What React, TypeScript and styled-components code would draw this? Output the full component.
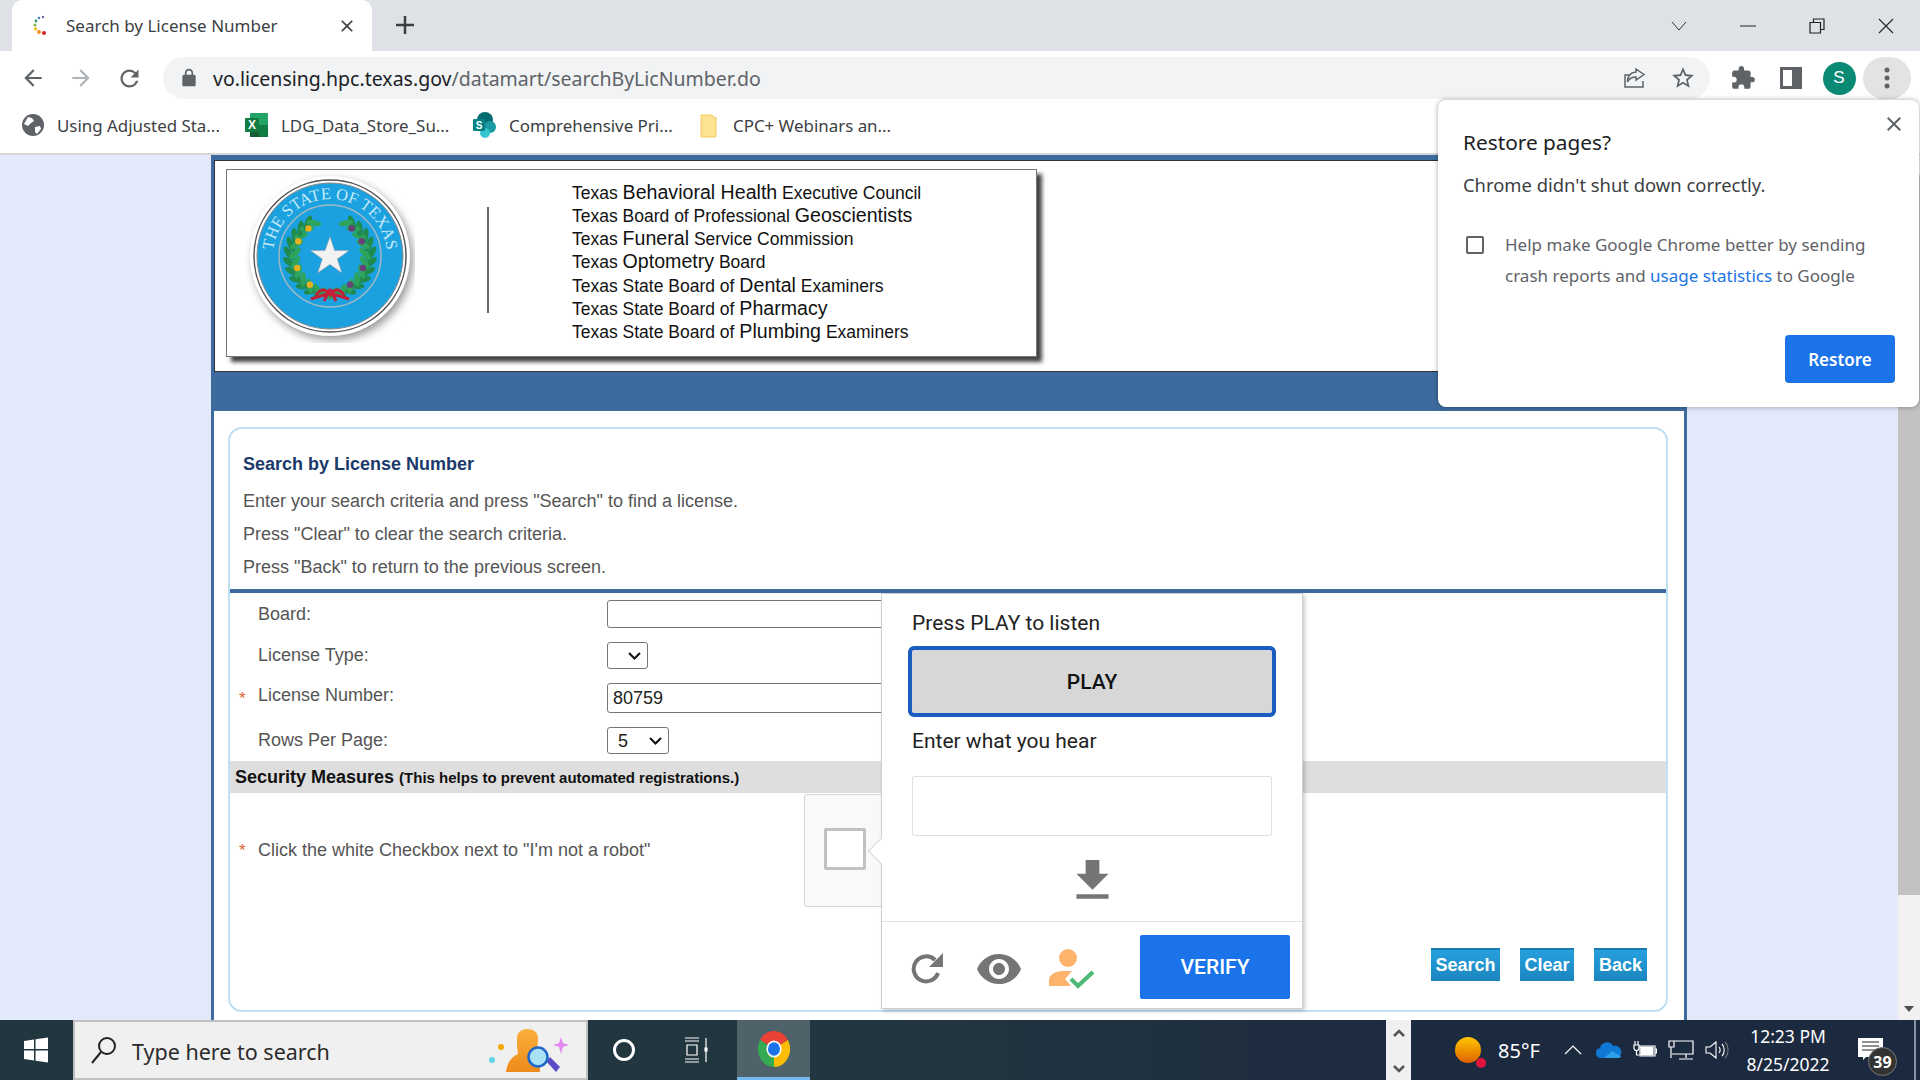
import React from "react";
import styled, { createGlobalStyle } from "styled-components";

const GlobalStyle = createGlobalStyle`
  html, body {
    margin: 0;
    padding: 0;
    height: 100%;
    overflow: hidden;
    font-family: "Liberation Sans", Arial, sans-serif;
  }
  * {
    box-sizing: border-box;
  }
`;

const UI_FONT = `"Noto Sans", "Open Sans", sans-serif`;

const Screen = styled.div`
  position: relative;
  width: 1920px;
  height: 1080px;
  display: flex;
  flex-direction: column;
  overflow: hidden;
  background: #fff;
`;

/* chrome: tabs */
const TabStrip = styled.div`
  height: 51px;
  background: #dee1e6;
  display: flex;
  align-items: flex-end;
  padding-left: 12px;
`;

const Tab = styled.div`
  width: 360px;
  height: 51px;
  background: #fff;
  border-radius: 10px 10px 0 0;
  display: flex;
  align-items: center;
  padding: 0 15px 0 19px;
  font-family: ${UI_FONT};
  font-size: 17px;
  color: #3c4043;
`;

const TabTitle = styled.span`
  margin-left: 15px;
  flex: 1;
`;

const NewTab = styled.div`
  width: 24px;
  height: 24px;
  margin: 0 0 14px 21px;
`;

const WindowControls = styled.div`
  margin-left: auto;
  height: 51px;
  display: flex;
  align-items: center;
`;

const WindowButton = styled.div`
  width: 69px;
  height: 42px;
  display: flex;
  align-items: center;
  justify-content: center;
`;

/* chrome: toolbar */
const Toolbar = styled.div`
  height: 51px;
  background: #fff;
  display: flex;
  align-items: center;
  padding: 3px 0 0 9px;
`;

const NavButton = styled.div`
  width: 48px;
  height: 40px;
  display: flex;
  align-items: center;
  justify-content: center;
`;

const Omnibox = styled.div`
  width: 1547px;
  height: 42px;
  margin-left: 10px;
  background: #f1f3f4;
  border-radius: 21px;
  display: flex;
  align-items: center;
  padding: 0 3px 0 16px;
  font-family: ${UI_FONT};
  font-size: 19.5px;
  color: #5f6368;
`;

const UrlText = styled.div`
  margin-left: 14px;
  flex: 1;
  white-space: nowrap;
`;

const UrlHost = styled.span`
  color: #202124;
`;

const OmniIcon = styled.div`
  width: 48px;
  display: flex;
  justify-content: center;
`;

const ToolButton = styled.div<{ $active?: boolean }>`
  width: 48px;
  height: 42px;
  display: flex;
  align-items: center;
  justify-content: center;
  border-radius: 21px;
  background: ${(props) => (props.$active ? "#e3e3e3" : "transparent")};
`;

const ToolGroup = styled.div`
  margin-left: 9px;
  display: flex;
`;

const Avatar = styled.div`
  width: 33px;
  height: 33px;
  border-radius: 50%;
  background: #0a8a74;
  color: #fff;
  font-size: 17px;
  display: flex;
  align-items: center;
  justify-content: center;
`;

/* chrome: bookmarks */
const BookmarkBar = styled.div`
  height: 53px;
  background: #fff;
  border-bottom: 2px solid #d6d6d6;
  display: flex;
  align-items: center;
  padding: 0 0 5px 21px;
  font-family: ${UI_FONT};
  font-size: 16.9px;
  color: #3c4043;
`;

const Bookmark = styled.div<{ $width: number }>`
  width: ${(props) => props.$width}px;
  display: flex;
  align-items: center;
  gap: 12px;
  white-space: nowrap;
`;

/* web page */
const Viewport = styled.div`
  flex: 1;
  min-height: 0;
  display: flex;
  background: #e3e8fa;
`;

const PageArea = styled.div`
  flex: 1;
  padding-left: 211px;
`;

const Main = styled.div`
  width: 1476px;
  height: 100%;
  background: #fff;
  border: solid #3d6b9e;
  border-width: 5px 3px 0;
  display: flex;
  flex-direction: column;
`;

const Banner = styled.div`
  height: 212px;
  flex: none;
  border-top: 1px solid #333;
  border-left: 1px solid #333;
  border-bottom: 1px solid #333;
  padding: 8px 0 0 11px;
`;

const LogoBox = styled.div`
  width: 811px;
  height: 188px;
  background: #fff;
  border: 1px solid #777;
  box-shadow: 5px 5px 4px #444;
  display: flex;
  align-items: flex-start;
  padding-left: 18px;
`;

const Seal = styled.svg`
  flex: none;
  margin-top: 1px;
`;

const LogoRule = styled.div`
  width: 2px;
  height: 106px;
  flex: none;
  margin: 37px 0 0 72px;
  background: #666;
`;

const BoardList = styled.div`
  margin: 11px 0 0 83px;
  font-size: 17.5px;
  color: #111;
  white-space: nowrap;
`;

const BoardLine = styled.div`
  height: 23.17px;
  line-height: 23.17px;
`;

const BoardBig = styled.span`
  font-size: 19.6px;
`;

const BlueBand = styled.div`
  height: 39px;
  flex: none;
  background: #3d6b9e;
`;

const Card = styled.div`
  flex: 1;
  min-height: 0;
  margin: 16px 16px 8px 14px;
  border: 2px solid #bfe0f2;
  border-radius: 14px;
  display: flex;
  flex-direction: column;
  overflow: hidden;
`;

const Intro = styled.div`
  padding: 25px 0 0 13px;
`;

const CardTitle = styled.div`
  font-size: 18px;
  font-weight: bold;
  line-height: 20px;
  margin-bottom: 11px;
  color: #1b3a6b;
`;

const IntroLine = styled.div`
  font-size: 18px;
  line-height: 33px;
  color: #555;
`;

const BlueRule = styled.div`
  height: 4px;
  flex: none;
  margin-top: 5px;
  background: #3d6b9e;
`;

const FormRow = styled.div<{ $height: number }>`
  height: ${(props) => props.$height}px;
  flex: none;
  display: flex;
  align-items: center;
`;

const Required = styled.span<{ $show?: boolean }>`
  width: 28px;
  flex: none;
  padding: 2px 0 0 9px;
  font-size: 17px;
  color: #e0663c;
  visibility: ${(props) => (props.$show ? "visible" : "hidden")};
`;

const FieldLabel = styled.label<{ $raised?: boolean }>`
  width: 349px;
  flex: none;
  font-size: 18px;
  color: #555;
  margin-bottom: ${(props) => (props.$raised ? 6 : 0)}px;
`;

const TextField = styled.input<{ $height: number }>`
  width: 300px;
  height: ${(props) => props.$height}px;
  border: 1px solid #767676;
  border-radius: 3px;
  padding: 0 5px;
  font: 18px "Liberation Sans", Arial, sans-serif;
  color: #222;
  background: #fff;
`;

const SelectWrap = styled.div<{ $width: number }>`
  position: relative;
  width: ${(props) => props.$width}px;
  height: 27px;
`;

const SelectField = styled.select`
  appearance: none;
  width: 100%;
  height: 100%;
  border: 1px solid #767676;
  border-radius: 3px;
  padding-left: 10px;
  font: 18px "Liberation Sans", Arial, sans-serif;
  color: #222;
  background: #fff;
`;

const SelectChevron = styled.svg`
  position: absolute;
  right: 7px;
  top: 10px;
  pointer-events: none;
`;

const SecurityBar = styled.div`
  height: 32px;
  flex: none;
  background: #dedede;
  display: flex;
  align-items: center;
  padding-left: 5px;
  font-weight: bold;
  font-size: 18px;
  color: #111;
  white-space: pre;
`;

const SecurityNote = styled.span`
  font-size: 15px;
`;

const RobotRow = styled.div`
  height: 114px;
  flex: none;
  display: flex;
  align-items: center;
`;

const RobotLabel = styled.div`
  width: 546px;
  flex: none;
  font-size: 18px;
  color: #555;
`;

const RecaptchaBox = styled.div`
  width: 300px;
  height: 113px;
  background: #f9f9f9;
  border: 1px solid #d3d3d3;
  border-radius: 3px;
  padding: 33px 0 0 19px;
`;

const RecaptchaCheck = styled.div`
  width: 42px;
  height: 42px;
  background: #fff;
  border: 3px solid #c1c1c1;
  border-radius: 2px;
`;

const ActionRow = styled.div`
  margin-top: auto;
  padding: 0 19px 29px 0;
  display: flex;
  justify-content: flex-end;
  gap: 20px;
`;

const ActionButton = styled.button<{ $width: number }>`
  width: ${(props) => props.$width}px;
  height: 33px;
  padding: 0;
  border: 0;
  border-top: 2px solid #1679ad;
  background: linear-gradient(#27a0de, #1b85bd);
  color: #fff;
  font: bold 18px "Liberation Sans", Arial, sans-serif;
`;

const Scrollbar = styled.div`
  width: 22px;
  flex: none;
  background: #f1f1f1;
  display: flex;
  flex-direction: column;
  align-items: center;
`;

const ScrollThumb = styled.div`
  width: 100%;
  height: 720px;
  margin-top: 20px;
  background: #c1c1c1;
`;

const ScrollArrow = styled.div`
  margin-top: auto;
  margin-bottom: 8px;
  width: 0;
  height: 0;
  border: 5px solid transparent;
  border-top: 6px solid #505050;
  border-bottom: 0;
`;

/* audio captcha popup */
const CaptchaPopup = styled.div`
  position: absolute;
  left: 881px;
  top: 593px;
  width: 422px;
  height: 416px;
  background: #fff;
  border: 1px solid #cfcfcf;
  box-shadow: 2px 2px 4px rgba(0, 0, 0, 0.2);
  font-family: Roboto, sans-serif;
  color: #222;
  display: flex;
  flex-direction: column;
`;

const CaptchaPointer = styled.div`
  position: absolute;
  left: -10px;
  top: 247px;
  width: 20px;
  height: 20px;
  background: #fff;
  border-left: 1px solid #d5d5d5;
  border-bottom: 1px solid #d5d5d5;
  transform: rotate(45deg);
`;

const CaptchaBody = styled.div`
  flex: 1;
  padding: 14px 27px 0 30px;
  display: flex;
  flex-direction: column;
`;

const CaptchaLabel = styled.div`
  font-size: 21px;
  line-height: 30px;
`;

const PlayButton = styled.button`
  width: 368px;
  height: 71px;
  margin: 8px 0 9px -4px;
  background: #d7d7d7;
  border: 4px solid #1a5cc0;
  border-radius: 6px;
  font: 500 21px Roboto, sans-serif;
  color: #111;
`;

const AnswerInput = styled.input`
  width: 360px;
  height: 60px;
  margin-top: 20px;
  border: 1px solid #e0e0e0;
  border-radius: 2px;
`;

const DownloadSlot = styled.div`
  margin-top: 17px;
  display: flex;
  justify-content: center;
  padding-right: 3px;
`;

const CaptchaFooter = styled.div`
  height: 87px;
  flex: none;
  border-top: 1px solid #e0e0e0;
  display: flex;
  align-items: center;
  padding: 0 12px 0 29px;
`;

const FooterIcons = styled.div`
  display: flex;
  align-items: center;
  gap: 30px;
  padding-top: 7px;
`;

const PersonSlot = styled.div`
  margin-left: -4px;
  display: flex;
`;

const VerifyButton = styled.button`
  margin-left: auto;
  width: 150px;
  height: 64px;
  margin-top: 3px;
  background: #1a73e8;
  border: 0;
  border-radius: 2px;
  color: #fff;
  font: 500 21px Roboto, sans-serif;
`;

/* restore bubble */
const RestoreBubble = styled.div`
  position: absolute;
  left: 1438px;
  top: 100px;
  width: 481px;
  height: 307px;
  background: #fff;
  border-radius: 8px;
  box-shadow: 0 0 5px rgba(0, 0, 0, 0.35);
  padding: 24px 25px 0;
  font-family: ${UI_FONT};
`;

const BubbleClose = styled.div`
  position: absolute;
  right: 13px;
  top: 12px;
  display: flex;
`;

const BubbleTitle = styled.div`
  font-size: 20.8px;
  line-height: 36px;
  color: #202124;
`;

const BubbleText = styled.div`
  margin-top: 10px;
  font-size: 18.4px;
  line-height: 30px;
  color: #3c4043;
`;

const ConsentRow = styled.div`
  margin-top: 30px;
  display: flex;
  align-items: flex-start;
`;

const ConsentBox = styled.div`
  width: 18px;
  height: 18px;
  margin: 6px 21px 0 3px;
  flex: none;
  border: 2px solid #5f6368;
  border-radius: 2px;
`;

const ConsentText = styled.div`
  font-size: 17px;
  line-height: 30.5px;
  color: #5f6368;
  white-space: nowrap;
`;

const ConsentLink = styled.span`
  color: #1a73e8;
`;

const RestoreButton = styled.button`
  position: absolute;
  right: 24px;
  bottom: 24px;
  width: 110px;
  height: 48px;
  border: 0;
  border-radius: 4px;
  background: #1a73e8;
  color: #fff;
  font: 600 17px ${UI_FONT};
`;

/* windows taskbar */
const Taskbar = styled.div`
  height: 60px;
  flex: none;
  background: linear-gradient(to right, #22363f 0, #22363f 45%, #1c2a40 75%);
  display: flex;
  align-items: stretch;
  padding-right: 4px;
  color: #fff;
  font-family: ${UI_FONT};
`;

const StartButton = styled.div`
  width: 73px;
  padding-right: 2px;
  display: flex;
  align-items: center;
  justify-content: center;
`;

const SearchBox = styled.div`
  width: 515px;
  background: #f0f0f0;
  border: solid #c0c0c0;
  border-width: 2px;
  display: flex;
  align-items: center;
  padding: 0 17px 0 15px;
  color: #2b2b2b;
  font-size: 21.5px;
`;

const SearchText = styled.span`
  margin: 3px 0 0 14px;
  flex: 1;
`;

const TaskSlot = styled.div<{ $width: number }>`
  width: ${(props) => props.$width}px;
  display: flex;
  align-items: center;
  justify-content: center;
`;

const ChromeTile = styled.div`
  width: 73px;
  margin-left: 5px;
  background: #4f6169;
  border-bottom: 3px solid #76b9ed;
  display: flex;
  align-items: center;
  justify-content: center;
`;

const TraySpacer = styled.div`
  flex: 1;
`;

const TrayScroller = styled.div`
  width: 25px;
  background: #f0f0f0;
  display: flex;
  flex-direction: column;
  align-items: center;
  justify-content: space-between;
  padding: 8px 0 6px;
`;

const Weather = styled.div`
  margin-left: 44px;
  width: 100px;
  display: flex;
  align-items: center;
  gap: 17px;
  font-size: 20px;
`;

const SunBadge = styled.div`
  position: relative;
  width: 26px;
  height: 26px;
  flex: none;
  border-radius: 50%;
  background: linear-gradient(#ffc800, #e06000);
  &::after {
    content: "";
    position: absolute;
    right: -5px;
    bottom: -5px;
    width: 10px;
    height: 10px;
    border-radius: 50%;
    background: #e0143c;
  }
`;

const TrayIcon = styled.div`
  width: 36px;
  display: flex;
  align-items: center;
  justify-content: center;
`;

const Clock = styled.div`
  width: 86px;
  margin-left: 10px;
  display: flex;
  flex-direction: column;
  align-items: center;
  justify-content: center;
  gap: 6px;
  font-size: 17.5px;
  line-height: 22px;
  white-space: nowrap;
`;

const NotifySlot = styled.div`
  position: relative;
  width: 25px;
  margin: 18px 0 0 27px;
`;

const NotifyBadge = styled.div`
  position: absolute;
  left: 10px;
  top: 9px;
  width: 29px;
  height: 29px;
  border-radius: 50%;
  border: 1px solid #777;
  background: #333;
  display: flex;
  align-items: center;
  justify-content: center;
  font-size: 16px;
  font-weight: 700;
`;

const DesktopEdge = styled.div`
  width: 2px;
  margin-left: 31px;
  background: #8a93a0;
`;

const Icon = ({
  d,
  size = 24,
  color = "#5f6368",
}: {
  d: string;
  size?: number;
  color?: string;
}) => (
  <svg width={size} height={size} viewBox="0 0 24 24" fill={color}>
    <path d={d} />
  </svg>
);

const PATHS = {
  back: "M20 11H7.83l5.59-5.59L12 4l-8 8 8 8 1.41-1.41L7.83 13H20v-2z",
  forward: "M12 4l-1.41 1.41L16.17 11H4v2h12.17l-5.58 5.59L12 20l8-8z",
  reload:
    "M17.65 6.35A7.958 7.958 0 0 0 12 4c-4.42 0-7.99 3.58-7.99 8s3.57 8 7.99 8c3.73 0 6.84-2.55 7.73-6h-2.08A5.99 5.99 0 0 1 12 18c-3.31 0-6-2.69-6-6s2.69-6 6-6c1.66 0 3.14.69 4.22 1.78L13 11h7V4l-2.35 2.35z",
  lock: "M18 8h-1V6c0-2.76-2.24-5-5-5S7 3.24 7 6v2H6c-1.1 0-2 .9-2 2v10c0 1.1.9 2 2 2h12c1.1 0 2-.9 2-2V10c0-1.1-.9-2-2-2zM9 6c0-1.66 1.34-3 3-3s3 1.34 3 3v2H9V6z",
  star: "M22 9.24l-7.19-.62L12 2 9.19 8.63 2 9.24l5.46 4.73L5.82 21 12 17.27 18.18 21l-1.63-7.03L22 9.24zM12 15.4l-3.76 2.27 1-4.28-3.32-2.88 4.38-.38L12 6.1l1.71 4.04 4.38.38-3.32 2.88 1 4.28L12 15.4z",
  puzzle:
    "M20.5 11H19V7c0-1.1-.9-2-2-2h-4V3.5C13 2.12 11.88 1 10.5 1S8 2.12 8 3.5V5H4c-1.1 0-1.99.9-1.99 2v3.8H3.5c1.49 0 2.7 1.21 2.7 2.7s-1.21 2.7-2.7 2.7H2V20c0 1.1.9 2 2 2h3.8v-1.5c0-1.49 1.21-2.7 2.7-2.7 1.49 0 2.7 1.21 2.7 2.7V22H17c1.1 0 2-.9 2-2v-4h1.5c1.38 0 2.5-1.12 2.5-2.5S21.88 11 20.5 11z",
  eye: "M12 4.5C7 4.5 2.73 7.61 1 12c1.73 4.39 6 7.5 11 7.5s9.27-3.11 11-7.5c-1.73-4.39-6-7.5-11-7.5zM12 17c-2.76 0-5-2.24-5-5s2.24-5 5-5 5 2.24 5 5-2.24 5-5 5zm0-8c-1.66 0-3 1.34-3 3s1.34 3 3 3 3-1.34 3-3-1.34-3-3-3z",
  download: "M19 9h-4V3H9v6H5l7 7 7-7zM5 18v2h14v-2H5z",
  close:
    "M19 6.41L17.59 5 12 10.59 6.41 5 5 6.41 10.59 12 5 17.59 6.41 19 12 13.41 17.59 19 19 17.59 13.41 12z",
};

const Favicon = () => (
  <svg width="20" height="24" viewBox="0 0 20 24">
    <circle cx="12" cy="3" r="1.2" fill="#7b5fb0" />
    <circle cx="8" cy="4" r="1.3" fill="#4a7fc8" />
    <circle cx="5" cy="7" r="1.4" fill="#2a9a6a" />
    <circle cx="4" cy="11" r="1.5" fill="#7ab648" />
    <circle cx="4.5" cy="15" r="1.7" fill="#f2c21a" />
    <circle cx="8" cy="18" r="1.9" fill="#f08a1a" />
    <circle cx="13" cy="19" r="2.1" fill="#d8262c" />
  </svg>
);

const Globe = () => (
  <svg width="24" height="24" viewBox="0 0 24 24">
    <circle cx="12" cy="12" r="11" fill="#5f6368" />
    <path d="M7 4l4 1 2 3-3 2-3 3-4-2zM14 14l5-1 1 3-4 5-2-2z" fill="#fff" />
  </svg>
);

const ExcelIcon = () => (
  <svg width="24" height="26" viewBox="0 0 24 26">
    <rect x="5" y="1" width="18" height="24" rx="1" fill="#21a366" />
    <rect x="14" y="13" width="9" height="12" fill="#107c41" />
    <rect x="5" y="13" width="9" height="12" fill="#185c37" />
    <rect x="0" y="6" width="14" height="14" rx="1" fill="#107c41" />
    <text x="7" y="17" textAnchor="middle" fontSize="12" fontWeight="bold" fill="#fff" fontFamily="Liberation Sans">
      X
    </text>
  </svg>
);

const SharePointIcon = () => (
  <svg width="24" height="26" viewBox="0 0 24 26">
    <circle cx="12" cy="8" r="8" fill="#036c70" />
    <circle cx="17" cy="15" r="6" fill="#1a9ba1" />
    <circle cx="12" cy="21" r="5" fill="#37c6d0" />
    <rect x="0" y="7" width="12" height="12" rx="1" fill="#038387" />
    <text x="6" y="17" textAnchor="middle" fontSize="10" fontWeight="bold" fill="#fff" fontFamily="Liberation Sans">
      S
    </text>
  </svg>
);

const FolderIcon = () => (
  <svg width="24" height="26" viewBox="0 0 24 26">
    <path d="M4 3h11l1 2h2a1 1 0 0 1 1 1v18a1 1 0 0 1-1 1H4z" fill="#fde293" stroke="#f0c95c" />
  </svg>
);

const leafAngles = [100, 114, 128, 142, 156, 170, 184, 198, 212, 226, 240];

const Wreath = ({ flip, berry }: { flip?: boolean; berry: string }) => (
  <g transform={flip ? "translate(170,0) scale(-1,1)" : undefined}>
    {leafAngles.map((angle) => {
      const rad = (angle * Math.PI) / 180;
      const x = 85 + 38 * Math.cos(rad);
      const y = 85 + 38 * Math.sin(rad);
      return (
        <g key={angle}>
          <ellipse cx={x - 3} cy={y} rx="8" ry="3.2" fill="#1f8a4c" transform={`rotate(${angle + 50} ${x - 3} ${y})`} />
          <ellipse cx={x + 3} cy={y} rx="7.5" ry="3" fill="#2ea35c" transform={`rotate(${angle + 130} ${x + 3} ${y})`} />
        </g>
      );
    })}
    {[125, 160, 205, 232].map((angle) => {
      const rad = (angle * Math.PI) / 180;
      return (
        <circle
          key={angle}
          cx={85 + 35 * Math.cos(rad)}
          cy={85 + 35 * Math.sin(rad)}
          r="3.2"
          fill={berry}
        />
      );
    })}
  </g>
);

const StateSeal = () => (
  <Seal width="170" height="172" viewBox="0 0 170 172">
    <defs>
      <filter id="sealBlur" x="-20%" y="-20%" width="140%" height="140%">
        <feGaussianBlur stdDeviation="4" />
      </filter>
      <path id="sealArc" d="M 31.400 104.500 A 57 57 0 1 1 138.600 104.500" />
    </defs>
    <circle cx="88" cy="89" r="80" fill="#999" filter="url(#sealBlur)" />
    <circle cx="85" cy="85" r="80" fill="#fff" />
    <circle cx="85" cy="85" r="76" fill="#fff" stroke="#555" strokeWidth="1.5" />
    <circle cx="85" cy="85" r="73" fill="#1ba1df" stroke="#888" strokeWidth="1" />
    <circle cx="85" cy="85" r="51" fill="none" stroke="#a0b8c4" strokeWidth="1.5" />
    <text fontFamily="Liberation Serif" fontSize="16.5" fill="#c4e9f8">
      <textPath href="#sealArc" startOffset="50%" textAnchor="middle">
        THE STATE OF TEXAS
      </textPath>
    </text>
    <Wreath berry="#e8b020" />
    <Wreath flip berry="#6a3f78" />
    <path
      d="M71 124q7-10 14 0 7-10 14 0M66 128l19-6 19 6M85 118l-6 12M85 118l6 12"
      fill="none"
      stroke="#c41e3a"
      strokeWidth="3"
    />
    <path
      d="M85 62l5.5 16.6h17.5l-14.2 10.3 5.4 16.6L85 95.3 70.3 105.5l5.4-16.6L61.5 78.6H79z"
      fill="#f2f2f2"
      stroke="#999"
      strokeWidth="0.6"
      transform="translate(85 84) scale(0.83) translate(-85 -84)"
    />
  </Seal>
);

const RefreshGlyph = () => (
  <svg width="34" height="34" viewBox="0 0 34 34">
    <path d="M27 21a12.5 12.5 0 1 1-3-13" fill="none" stroke="#757575" strokeWidth="4" />
    <path d="M32 1v14H18z" fill="#757575" />
  </svg>
);

const PersonCheck = () => (
  <svg width="46" height="40" viewBox="0 0 46 40">
    <circle cx="19" cy="9" r="9" fill="#fdb36b" />
    <path d="M0 37v-6c0-5 6-9 14-9h9l-7 8 6 7z" fill="#fdb36b" />
    <path d="M22 30l7 7 15-14" fill="none" stroke="#4cba74" strokeWidth="4" />
  </svg>
);

const WindowsLogo = () => (
  <svg width="26" height="26" viewBox="0 0 26 26" fill="#fff">
    <path d="M1 4l10-1.5V12H1zM12.5 2.3L25 .5V12H12.5zM1 13.5h10v10L1 22zM12.5 13.5H25V25.5l-12.5-1.8z" />
  </svg>
);

const SearchGlyph = () => (
  <svg width="28" height="30" viewBox="0 0 28 30" fill="none" stroke="#222" strokeWidth="2">
    <circle cx="17" cy="11" r="8" />
    <path d="M11 17L2 28" />
  </svg>
);

const SearchArt = () => (
  <svg width="80" height="44" viewBox="0 0 80 44">
    <defs>
      <linearGradient id="artBody" x1="0" y1="0" x2="0" y2="1">
        <stop offset="0" stopColor="#fbb03b" />
        <stop offset="1" stopColor="#ee8a1c" />
      </linearGradient>
    </defs>
    <circle cx="12" cy="19" r="3" fill="#f5a800" />
    <circle cx="3" cy="32" r="3" fill="#62d4e8" />
    <path d="M28 10c0-12 21-12 21 0 0 10-2 12-3 15 3 3 5 9 5 19H17c1-9 5-15 12-18-1-6-1-10-1-16z" fill="url(#artBody)" />
    <path d="M57 33l10 11 4-5-10-10z" fill="#5b4dc7" />
    <circle cx="49" cy="29" r="9.5" fill="#a8e2f4" stroke="#1e66c8" strokeWidth="2.5" />
    <path d="M72 9l2 6 6 2-6 2-2 7-2-7-6-2 6-2z" fill="#e48bf0" />
  </svg>
);

const CortanaRing = () => (
  <svg width="24" height="24" viewBox="0 0 24 24">
    <circle cx="12" cy="12" r="9.5" fill="none" stroke="#fff" strokeWidth="3" />
  </svg>
);

const TaskView = () => (
  <svg width="26" height="26" viewBox="0 0 26 26" fill="none" stroke="#fff" strokeWidth="1.2">
    <path d="M2 1h14M2 4h14M4 8h10v10H4zM2 22h14M2 25h14M23 1v10M23 14v11" />
    <path d="M22 11h2v3h-2z" fill="#fff" />
  </svg>
);

const ChromeLogo = () => (
  <svg width="32" height="36" viewBox="0 0 24 24" preserveAspectRatio="none">
    <path d="M12 12L1.6 6A12 12 0 0 1 22.4 6z" fill="#ea4335" />
    <path d="M12 12L22.4 6A12 12 0 0 1 12 24z" fill="#fbbc04" />
    <path d="M12 12L12 24A12 12 0 0 1 1.6 6z" fill="#34a853" />
    <circle cx="12" cy="12" r="5.7" fill="#fff" />
    <circle cx="12" cy="12" r="4.5" fill="#1a73e8" />
  </svg>
);

const MiniChevron = ({ up }: { up?: boolean }) => (
  <svg width="14" height="10" viewBox="0 0 14 10" fill="none" stroke="#555" strokeWidth="2.5">
    <path d={up ? "M2 8l5-5 5 5" : "M2 2l5 5 5-5"} />
  </svg>
);

const Chevron = () => (
  <SelectChevron width="13" height="8" viewBox="0 0 13 8" fill="none" stroke="#111" strokeWidth="2">
    <path d="M1 1l5.5 5.5L12 1" />
  </SelectChevron>
);

const App = () => {
  return (
    <Screen>
      <GlobalStyle />

      <TabStrip>
        <Tab>
          <Favicon />
          <TabTitle>Search by License Number</TabTitle>
          <Icon d={PATHS.close} size={20} color="#3c4043" />
        </Tab>
        <NewTab>
          <svg width="24" height="24" viewBox="0 0 24 24" stroke="#3c4043" strokeWidth="2.5">
            <path d="M12 3v18M3 12h18" />
          </svg>
        </NewTab>
        <WindowControls>
          <WindowButton>
            <svg width="16" height="10" viewBox="0 0 16 10" fill="none" stroke="#333">
              <path d="M1 1l7 8 7-8" />
            </svg>
          </WindowButton>
          <WindowButton>
            <svg width="16" height="2" viewBox="0 0 16 2" stroke="#222">
              <path d="M0 1h16" />
            </svg>
          </WindowButton>
          <WindowButton>
            <svg width="16" height="16" viewBox="0 0 16 16" fill="none" stroke="#222" strokeWidth="1.2">
              <path d="M1 4.5h10.500V15H1zM4.500 4.500V1H15v10.500h-3.500" />
            </svg>
          </WindowButton>
          <WindowButton>
            <svg width="16" height="16" viewBox="0 0 16 16" stroke="#222" strokeWidth="1.1">
              <path d="M1 1l14 14M15 1L1 15" />
            </svg>
          </WindowButton>
        </WindowControls>
      </TabStrip>

      <Toolbar>
        <NavButton>
          <Icon d={PATHS.back} size={26} />
        </NavButton>
        <NavButton>
          <Icon d={PATHS.forward} size={26} color="#b0b3b8" />
        </NavButton>
        <NavButton>
          <Icon d={PATHS.reload} size={27} />
        </NavButton>
        <Omnibox>
          <Icon d={PATHS.lock} size={20} />
          <UrlText>
            <UrlHost>vo.licensing.hpc.texas.gov</UrlHost>/datamart/searchByLicNumber.do
          </UrlText>
          <OmniIcon>
            <svg width="24" height="24" viewBox="0 0 24 24" fill="none" stroke="#5f6368" strokeWidth="1.5">
              <path d="M20 15v6H2V9h5M13 3l8 5.5-8 5.5v-3c-5 0-7 2-8.5 5 0-6 3-9.5 8.5-10z" />
            </svg>
          </OmniIcon>
          <OmniIcon>
            <Icon d={PATHS.star} size={26} />
          </OmniIcon>
        </Omnibox>
        <ToolGroup>
          <ToolButton>
            <Icon d={PATHS.puzzle} size={26} />
          </ToolButton>
          <ToolButton>
            <svg width="22" height="22" viewBox="0 0 22 22">
              <path d="M0 0h22v22H0z" fill="#5f6368" />
              <path d="M3 3h9v16H3z" fill="#fff" />
            </svg>
          </ToolButton>
          <ToolButton>
            <Avatar>S</Avatar>
          </ToolButton>
          <ToolButton $active>
            <svg width="6" height="22" viewBox="0 0 6 22" fill="#5f6368">
              <circle cx="3" cy="3" r="2.5" />
              <circle cx="3" cy="11" r="2.5" />
              <circle cx="3" cy="19" r="2.5" />
            </svg>
          </ToolButton>
        </ToolGroup>
      </Toolbar>

      <BookmarkBar>
        <Bookmark $width={224}>
          <Globe />
          Using Adjusted Sta...
        </Bookmark>
        <Bookmark $width={228}>
          <ExcelIcon />
          LDG_Data_Store_Su...
        </Bookmark>
        <Bookmark $width={224}>
          <SharePointIcon />
          Comprehensive Pri...
        </Bookmark>
        <Bookmark $width={224}>
          <FolderIcon />
          CPC+ Webinars an...
        </Bookmark>
      </BookmarkBar>

      <Viewport>
        <PageArea>
          <Main>
            <Banner>
              <LogoBox>
                <StateSeal />
                <LogoRule />
                <BoardList>
                  <BoardLine>
                    Texas <BoardBig>Behavioral Health</BoardBig> Executive Council
                  </BoardLine>
                  <BoardLine>
                    Texas Board of Professional <BoardBig>Geoscientists</BoardBig>
                  </BoardLine>
                  <BoardLine>
                    Texas <BoardBig>Funeral</BoardBig> Service Commission
                  </BoardLine>
                  <BoardLine>
                    Texas <BoardBig>Optometry</BoardBig> Board
                  </BoardLine>
                  <BoardLine>
                    Texas State Board of <BoardBig>Dental</BoardBig> Examiners
                  </BoardLine>
                  <BoardLine>
                    Texas State Board of <BoardBig>Pharmacy</BoardBig>
                  </BoardLine>
                  <BoardLine>
                    Texas State Board of <BoardBig>Plumbing</BoardBig> Examiners
                  </BoardLine>
                </BoardList>
              </LogoBox>
            </Banner>
            <BlueBand />
            <Card>
              <Intro>
                <CardTitle>Search by License Number</CardTitle>
                <IntroLine>Enter your search criteria and press "Search" to find a license.</IntroLine>
                <IntroLine>Press "Clear" to clear the search criteria.</IntroLine>
                <IntroLine>Press "Back" to return to the previous screen.</IntroLine>
              </Intro>
              <BlueRule />
              <FormRow $height={42}>
                <Required>*</Required>
                <FieldLabel>Board:</FieldLabel>
                <TextField $height={28} readOnly />
              </FormRow>
              <FormRow $height={41}>
                <Required>*</Required>
                <FieldLabel>License Type:</FieldLabel>
                <SelectWrap $width={41}>
                  <SelectField>
                    <option value=""></option>
                  </SelectField>
                  <Chevron />
                </SelectWrap>
              </FormRow>
              <FormRow $height={44}>
                <Required $show>*</Required>
                <FieldLabel $raised>License Number:</FieldLabel>
                <TextField $height={30} readOnly value="80759" />
              </FormRow>
              <FormRow $height={41}>
                <Required>*</Required>
                <FieldLabel>Rows Per Page:</FieldLabel>
                <SelectWrap $width={62}>
                  <SelectField defaultValue="5">
                    <option value="5">5</option>
                  </SelectField>
                  <Chevron />
                </SelectWrap>
              </FormRow>
              <SecurityBar>
                Security Measures <SecurityNote>(This helps to prevent automated registrations.)</SecurityNote>
              </SecurityBar>
              <RobotRow>
                <Required $show>*</Required>
                <RobotLabel>Click the white Checkbox next to "I'm not a robot"</RobotLabel>
                <RecaptchaBox>
                  <RecaptchaCheck />
                </RecaptchaBox>
              </RobotRow>
              <ActionRow>
                <ActionButton $width={69}>Search</ActionButton>
                <ActionButton $width={54}>Clear</ActionButton>
                <ActionButton $width={53}>Back</ActionButton>
              </ActionRow>
            </Card>
          </Main>
        </PageArea>
        <Scrollbar>
          <ScrollThumb />
          <ScrollArrow />
        </Scrollbar>
      </Viewport>

      <Taskbar>
        <StartButton>
          <WindowsLogo />
        </StartButton>
        <SearchBox>
          <SearchGlyph />
          <SearchText>Type here to search</SearchText>
          <SearchArt />
        </SearchBox>
        <TaskSlot $width={72}>
          <CortanaRing />
        </TaskSlot>
        <TaskSlot $width={72}>
          <TaskView />
        </TaskSlot>
        <ChromeTile>
          <ChromeLogo />
        </ChromeTile>
        <TraySpacer />
        <TrayScroller>
          <MiniChevron up />
          <MiniChevron />
        </TrayScroller>
        <Weather>
          <SunBadge />
          85°F
        </Weather>
        <TrayIcon>
          <svg width="18" height="10" viewBox="0 0 18 10" fill="none" stroke="#fff" strokeWidth="1.2">
            <path d="M1 9l8-8 8 8" />
          </svg>
        </TrayIcon>
        <TrayIcon>
          <svg width="26" height="16" viewBox="0 0 26 16">
            <path d="M5 16a5 5 0 0 1-1-9.9A7 7 0 0 1 17 4a5.5 5.5 0 0 1 4 12z" fill="#0f78d4" />
            <path d="M8 16l8-7 9 5a3 3 0 0 1-3 2z" fill="#2aa0e8" />
          </svg>
        </TrayIcon>
        <TrayIcon>
          <svg width="24" height="20" viewBox="0 0 24 20" fill="none" stroke="#fff" strokeWidth="1.2">
            <path d="M2 1v4M5 1v4M1 5h5v3a2 2 0 0 1-5 0zM3.5 10v5h3" />
            <path d="M7 6h15v10H7zM22 9h1.5v4H22z" />
            <path d="M8 7h12v8H8z" fill="#fff" />
          </svg>
        </TrayIcon>
        <TrayIcon>
          <svg width="26" height="20" viewBox="0 0 26 20" fill="none" stroke="#fff" strokeWidth="1.2">
            <path d="M1 1h24v13H4M1 1h5v6H1zM3 7v11M18 14v4M11 19h14" />
          </svg>
        </TrayIcon>
        <TrayIcon>
          <svg width="24" height="20" viewBox="0 0 24 20" fill="none" stroke="#fff" strokeWidth="1.1">
            <path d="M1 7h4l6-5v16l-6-5H1zM14 7c1.5 2 1.5 4 0 6M17 4c3 3 3 9 0 12" />
            <path d="M20 2c4 4 4 12 0 16" stroke="#777" />
          </svg>
        </TrayIcon>
        <Clock>
          <span>12:23 PM</span>
          <span>8/25/2022</span>
        </Clock>
        <NotifySlot>
          <svg width="25" height="22" viewBox="0 0 25 22" fill="#fff">
            <path d="M0 0h25v19H8l-3 3v-3H0z" />
            <path d="M4 4h17M4 8h17M4 12h17" stroke="#222" strokeWidth="1" />
          </svg>
          <NotifyBadge>39</NotifyBadge>
        </NotifySlot>
        <DesktopEdge />
      </Taskbar>

      <CaptchaPopup>
        <CaptchaPointer />
        <CaptchaBody>
          <CaptchaLabel>Press PLAY to listen</CaptchaLabel>
          <PlayButton>PLAY</PlayButton>
          <CaptchaLabel>Enter what you hear</CaptchaLabel>
          <AnswerInput readOnly />
          <DownloadSlot>
            <Icon d={PATHS.download} size={55} color="#757575" />
          </DownloadSlot>
        </CaptchaBody>
        <CaptchaFooter>
          <FooterIcons>
            <RefreshGlyph />
            <Icon d={PATHS.eye} size={48} color="#757575" />
            <PersonSlot>
              <PersonCheck />
            </PersonSlot>
          </FooterIcons>
          <VerifyButton>VERIFY</VerifyButton>
        </CaptchaFooter>
      </CaptchaPopup>

      <RestoreBubble>
        <BubbleClose>
          <Icon d={PATHS.close} size={24} color="#5f6368" />
        </BubbleClose>
        <BubbleTitle>Restore pages?</BubbleTitle>
        <BubbleText>Chrome didn't shut down correctly.</BubbleText>
        <ConsentRow>
          <ConsentBox />
          <ConsentText>
            Help make Google Chrome better by sending
            <br />
            crash reports and <ConsentLink>usage statistics</ConsentLink> to Google
          </ConsentText>
        </ConsentRow>
        <RestoreButton>Restore</RestoreButton>
      </RestoreBubble>
    </Screen>
  );
};

export default App;
